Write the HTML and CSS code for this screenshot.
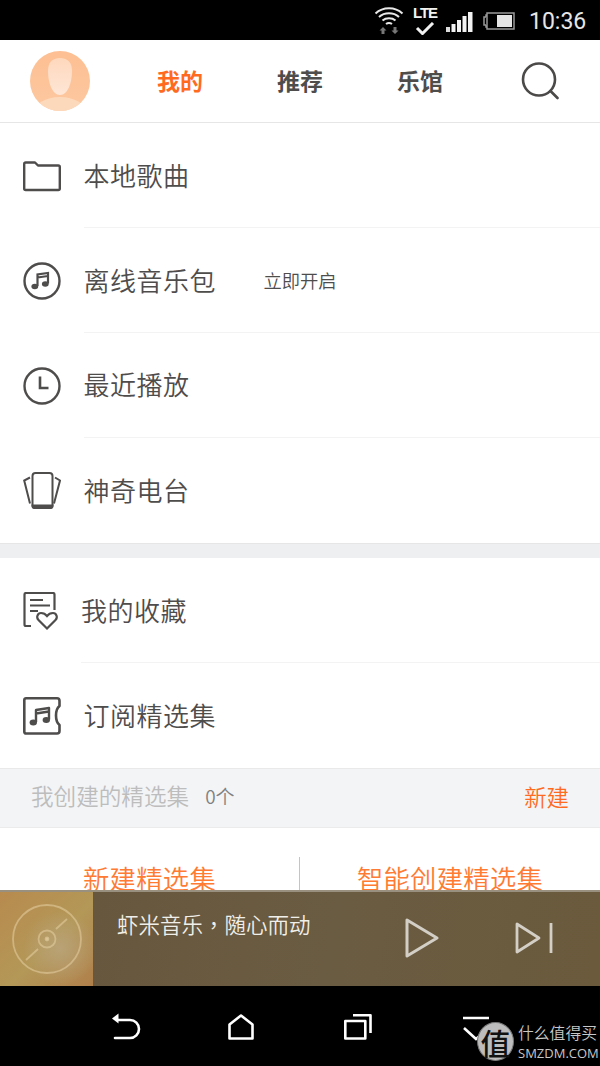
FILE: index.html
```html
<!DOCTYPE html>
<html lang="zh">
<head>
<meta charset="utf-8">
<title>虾米音乐</title>
<link rel="stylesheet" href="styles.css">
</head>
<body>
<div class="status">
  <svg class="st-wifi" width="30" height="28" viewBox="0 0 30 28" fill="none" stroke="#e8e8e8" stroke-width="2">
    <path d="M1.500 7.500C9 .5 21 .5 28.500 7.500M5 11c5.500-5 14.500-5 20 0M8.500 14.500c3.500-3 9.500-3 13 0M12 18c1.800-1.300 4.200-1.300 6 0"/>
    <path d="M9 21l-3.500 3.500h2V28h3v-3.500h2zM21 28l3.500-3.500h-2V21h-3v3.500h-2z" fill="#777" stroke="none"/>
  </svg>
  <div class="st-lte">
    <span class="st-lte-text">LTE</span>
    <svg width="20" height="13" viewBox="0 0 20 13" fill="none" stroke="#f2f2f2" stroke-width="3"><path d="M2 6l5.500 5.500L18 1"/></svg>
  </div>
  <svg class="st-signal" width="27" height="20" viewBox="0 0 27 20" fill="#f2f2f2">
    <rect x="0" y="15" width="4" height="5" fill="#ddd"/><rect x="5.500" y="12" width="4" height="8"/><rect x="11" y="8" width="4" height="12"/><rect x="16.500" y="4" width="4" height="16"/><rect x="22" y="0" width="4.500" height="20"/>
  </svg>
  <svg class="st-batt" width="32" height="18" viewBox="0 0 32 18">
    <path d="M3 5V3h1M3 13v2h1M3 5H1v8h2" fill="none" stroke="#999" stroke-width="1.500"/>
    <rect x="4" y="1" width="27" height="16" fill="none" stroke="#999" stroke-width="1.500"/>
    <rect x="14" y="3" width="15" height="12" fill="#e6e6e6"/>
  </svg>
  <span class="st-time">10:36</span>
</div>

<main class="main">
  <header class="topbar">
    <div class="avatar">
      <svg width="60" height="60" viewBox="0 0 60 60">
        <defs>
          <clipPath id="av"><circle cx="30" cy="30" r="30"/></clipPath>
          <linearGradient id="avbg" x1="0" y1="0" x2="0" y2="1"><stop offset="0" stop-color="#fdbf93"/><stop offset="1" stop-color="#fdc8a0"/></linearGradient>
          <linearGradient id="avface" x1="0" y1="0" x2="0" y2="1"><stop offset="0" stop-color="#fed8bd"/><stop offset="1" stop-color="#fee6d6"/></linearGradient>
        </defs>
        <g clip-path="url(#av)">
          <rect width="60" height="60" fill="url(#avbg)"/>
          <ellipse cx="30" cy="61" rx="26" ry="15" fill="#fdd9bc"/>
          <path d="M30 7c-8 0-12 5-12 13 0 11 4 24 12 24s12-13 12-24c0-8-4-13-12-13z" fill="url(#avface)"/>
        </g>
      </svg>
    </div>
    <nav class="tabs">
      <span class="tab tab-on">我的</span>
      <span class="tab">推荐</span>
      <span class="tab">乐馆</span>
    </nav>
    <svg class="search" width="38" height="38" viewBox="0 0 38 38" fill="none" stroke="#4c4949" stroke-width="2.600" stroke-linecap="round">
      <circle cx="18" cy="17.500" r="16"/><path d="M29.500 29l7 7"/>
    </svg>
  </header>

  <section class="group">
    <div class="row">
      <svg class="ico" width="38" height="38" viewBox="0 0 38 38" fill="none" stroke="#4f4c4c" stroke-width="2.400" stroke-linejoin="round">
        <path d="M1.200 7c0-1 .5-1.500 1.500-1.500H12l3 3h20.300c1 0 1.500.5 1.500 1.500v21.500c0 1-.5 1.500-1.500 1.500H2.700c-1 0-1.500-.5-1.500-1.500z"/>
      </svg>
      <div class="cell cell-low"><span class="label">本地歌曲</span></div>
    </div>
    <div class="row">
      <svg class="ico" width="38" height="38" viewBox="0 0 38 38" fill="none" stroke="#4f4c4c" stroke-width="2.400">
        <circle cx="19" cy="19" r="17.500"/>
        <path d="M14.500 24V12.500l10.500-1.500v10.500M14.500 15.500l10.500-1.500" stroke-width="2.200"/>
        <ellipse cx="11.800" cy="24.500" rx="3.400" ry="2.700" fill="#4f4c4c" stroke="none"/>
        <ellipse cx="22.300" cy="22" rx="3.400" ry="2.700" fill="#4f4c4c" stroke="none"/>
      </svg>
      <div class="cell cell-low"><span class="label">离线音乐包</span><span class="hint">立即开启</span></div>
    </div>
    <div class="row">
      <svg class="ico" width="38" height="38" viewBox="0 0 38 38" fill="none" stroke="#4f4c4c" stroke-width="2.400">
        <circle cx="19" cy="19" r="17.500"/><path d="M17 9.500V21h8.500" stroke-width="2.600"/>
      </svg>
      <div class="cell"><span class="label">最近播放</span></div>
    </div>
    <div class="row">
      <svg class="ico" width="38" height="38" viewBox="0 0 38 38" fill="none" stroke="#4f4c4c" stroke-width="2">
        <rect x="9.500" y="1" width="20" height="35" rx="3"/><path d="M9.500 33.500h20V34c0 1-1 2-2 2h-16c-1 0-2-1-2-2z" fill="#4f4c4c"/>
        <path d="M7 5.500L1.200 8.500 7 31.500M32 5.500l5 3-6 23"/>
      </svg>
      <div class="cell cell-last"><span class="label">神奇电台</span></div>
    </div>
  </section>

  <div class="band"></div>

  <section class="group">
    <div class="row">
      <svg class="ico" width="38" height="38" viewBox="0 0 38 38" fill="none" stroke="#4f4c4c" stroke-width="2.200">
        <path d="M8 34H3c-1 0-1.500-.5-1.500-1.500V2.500C1.500 1.500 2 1 3 1h27c1 0 1.500.5 1.500 1.500V18"/>
        <path d="M7 8h13M7 13.500h20M7 19h8"/>
        <path d="M24 36.500L15.500 28c-2.500-2.500-1-7 2.500-7 2.500 0 4.500 1 6 3 1.500-2 3.500-3 6-3 3.500 0 5 4.500 2.500 7z" fill="#fff"/>
      </svg>
      <div class="cell cell-tight cell-low"><span class="label">我的收藏</span></div>
    </div>
    <div class="row">
      <svg class="ico" width="38" height="38" viewBox="0 0 38 38" fill="none" stroke="#4f4c4c" stroke-width="2.600" stroke-linejoin="round">
        <path d="M3 1.300h31c1.500 0 2.500 1 2.500 2.500V9c-2.500 2-3.500 5.500-3.500 9.500s1 7.500 3.500 9.500v6c0 1.500-1 2.500-2.500 2.500H3c-1 0-1.700-.7-1.700-1.700V3c0-1 .7-1.700 1.700-1.700z"/>
        <path d="M13 25V13l13-2v11.500M13 16.500l13-2" stroke-width="2.400"/>
        <ellipse cx="10.300" cy="25.500" rx="3.700" ry="2.900" fill="#4f4c4c" stroke="none"/>
        <ellipse cx="23.300" cy="23" rx="3.700" ry="2.900" fill="#4f4c4c" stroke="none"/>
      </svg>
      <div class="cell cell-last"><span class="label">订阅精选集</span></div>
    </div>
  </section>

  <div class="listhead">
    <span class="lh-title">我创建的精选集</span>
    <span class="lh-count">0个</span>
    <span class="lh-new">新建</span>
  </div>

  <div class="actions">
    <span class="act act-left">新建精选集</span>
    <span class="act act-right">智能创建精选集</span>
  </div>
</main>

<section class="player">
  <div class="cover">
    <svg width="70" height="70" viewBox="0 0 70 70" fill="none" stroke="#e6cfa2" stroke-opacity=".55" stroke-width="1.800">
      <circle cx="35" cy="35" r="34"/><circle cx="35" cy="35" r="8.500"/><circle cx="35" cy="35" r="1.500" fill="#e6cfa2" fill-opacity=".6"/>
      <path d="M44 25l11-10M26 45L14 56"/>
    </svg>
  </div>
  <div class="pl-title" lang="zh-Hant">虾米音乐，随心而动</div>
  <svg class="pl-play" width="34" height="40" viewBox="0 0 34 40" fill="none" stroke="#d3cec6" stroke-width="3" stroke-linejoin="round"><path d="M2 2v36l30-18z"/></svg>
  <svg class="pl-next" width="38" height="32" viewBox="0 0 38 32" fill="none" stroke="#d3cec6" stroke-width="2.800" stroke-linejoin="round"><path d="M2 2v28l22-14zM36 1v30"/></svg>
</section>

<footer class="navbar">
  <svg class="nv nv-back" width="32" height="27" viewBox="0 0 32 27" fill="none" stroke="#fff" stroke-width="2.600" stroke-linecap="round" stroke-linejoin="round">
    <path d="M8 7h12c5 0 9 4 9 9s-4 9-9 9H5"/><path d="M2 5.500L8.500 0.500v10z" fill="#fff" stroke="none"/>
  </svg>
  <svg class="nv nv-home" width="26" height="26" viewBox="0 0 26 26" fill="none" stroke="#fff" stroke-width="2.600" stroke-linejoin="round"><path d="M1.500 10.500L13 1.500l11.500 9v14h-23z"/></svg>
  <svg class="nv nv-rec" width="28" height="26" viewBox="0 0 28 26" fill="none" stroke="#fff" stroke-width="2.600" stroke-linejoin="round"><rect x="1.300" y="7" width="20" height="17.500"/><path d="M9 1.300h17.500V19"/></svg>
  <svg class="nv nv-down" width="30" height="26" viewBox="0 0 30 26" fill="none" stroke="#fff" stroke-width="2.600"><path d="M1 2h26M2 12l12 11 13-11"/></svg>
</footer>

<aside class="mark">
  <span class="mark-seal">值</span>
  <span class="mark-text">
    <span class="mark-cn">什么值得买</span>
    <span class="mark-en">SMZDM.COM</span>
  </span>
</aside>
</body>
</html>
```

FILE: styles.css
```css
* { box-sizing: border-box; }
html, body { margin: 0; padding: 0; }
body {
  position: relative;
  width: 600px;
  height: 1066px;
  overflow: hidden;
  display: flex;
  flex-direction: column;
  background: #fff;
  font-family: "Noto Sans CJK SC", "Noto Sans", sans-serif;
  color: #4f4c4c;
}

/* status bar */
.status {
  flex: 0 0 40px;
  background: #000;
  display: flex;
  align-items: flex-start;
  padding-left: 374px;
  color: #e8e8e8;
}
.st-wifi { margin-top: 6px; }
.st-lte {
  width: 24px;
  margin: 5px 0 0 9px;
  display: flex;
  flex-direction: column;
  align-items: center;
}
.st-lte-text {
  font: 700 15px/16px "Liberation Sans", sans-serif;
  letter-spacing: -1px;
  color: #f2f2f2;
}
.st-lte svg { margin-top: 1px; }
.st-signal { margin: 12px 0 0 9px; }
.st-batt { margin: 12px 0 0 10px; }
.st-time {
  margin: 8px 0 0 14px;
  font: 400 23px/28px Roboto, sans-serif;
  color: #e6e6e6;
}

/* main */
.main {
  flex: 1 1 auto;
  min-height: 0;
  overflow: hidden;
}
.topbar {
  height: 83px;
  display: flex;
  align-items: center;
  padding: 0 0 0 30px;
  border-bottom: 1px solid #e6e6e6;
}
.avatar { width: 60px; height: 60px; }
.avatar svg { display: block; }
.tabs { display: flex; gap: 74px; margin: -2px 0 0 67px; }
.tab {
  width: 46px;
  font-size: 23px;
  line-height: 30px;
  font-weight: 700;
  white-space: nowrap;
  color: #4f4c4c;
}
.tab-on { color: #ff6a1f; }
.search { margin: -1px 0 0 78px; }

.row {
  height: 105px;
  display: flex;
  align-items: center;
  padding-left: 23px;
}
.ico { flex: none; margin-right: 22.500px; }
.cell {
  flex: 1;
  height: 100%;
  display: flex;
  align-items: center;
  padding-bottom: 2px;
  border-bottom: 1px solid #f3f3f3;
}
.cell-low { padding-bottom: 0; }
.cell-last { border-bottom: 0; }
.cell-tight { margin-left: -2.500px; }
.label {
  font-size: 26px;
  letter-spacing: .5px;
  line-height: 36px;
  font-weight: 350;
  color: #4f4c4c;
}
.hint {
  margin-left: 47.500px;
  font-size: 18.300px;
  line-height: 26px;
  font-weight: 350;
  color: #4f4c4c;
}

.band {
  height: 15px;
  background: #eeeff0;
  border-top: 1px solid #e6e6e6;
}

.listhead {
  height: 60px;
  display: flex;
  align-items: center;
  padding: 0 31px 4px;
  background: #f3f4f6;
  border-top: 1px solid #e9e9ea;
  border-bottom: 1px solid #ebebeb;
}
.lh-title { font-size: 22.600px; line-height: 30px; font-weight: 350; color: #bdbdbd; }
.lh-count { margin-left: 16px; font-size: 19px; line-height: 30px; font-weight: 350; color: #808080; }
.lh-new { margin-left: auto; font-size: 22.400px; line-height: 30px; font-weight: 350; color: #ff6a1f; }

.actions {
  display: grid;
  grid-template-columns: 299px 1fr;
  padding-top: 29px;
}
.act {
  height: 40px;
  font-size: 26.300px;
  letter-spacing: .3px;
  line-height: 42px;
  font-weight: 350;
  color: #ff7a33;
  text-align: center;
  white-space: nowrap;
}
.act-right { border-left: 1px solid #c4c4c4; }

/* player */
.player {
  flex: 0 0 96px;
  display: flex;
  align-items: flex-start;
  border-top: 2px solid #9a9080;
  background: linear-gradient(100deg, #66553c 0%, #6a5c42 55%, #6b5a3c 100%);
}
.cover {
  flex: 0 0 93px;
  height: 100%;
  display: flex;
  align-items: center;
  justify-content: center;
  background:
    radial-gradient(circle at 65% 60%, #b9a276 0%, rgba(185,162,118,0) 45%),
    linear-gradient(135deg, #b88a4e 0%, #b39858 55%, #b07f4a 100%);
}
.pl-title {
  flex: 0 0 auto;
  width: 288px;
  margin: 18px 0 0 24px;
  font-family: "Noto Sans CJK TC", sans-serif;
  font-size: 21.500px;
  line-height: 28px;
  font-weight: 350;
  color: #f1efe9;
  white-space: nowrap;
}
.pl-play { flex: none; margin-top: 26px; }
.pl-next { flex: none; margin: 30px 0 0 76px; }

/* nav */
.navbar {
  flex: 0 0 80px;
  background: #000;
  display: flex;
  align-items: flex-start;
  padding-left: 110px;
}
.nv { flex: none; margin-top: 27px; }
.nv-home { margin-left: 86px; margin-top: 28px; }
.nv-rec { margin-left: 90px; margin-top: 28px; }
.nv-down { margin-left: 90px; margin-top: 30px; }

/* watermark */
.mark {
  position: absolute;
  left: 477px;
  top: 1022px;
  display: flex;
  align-items: center;
  gap: 4px;
  color: #c8c8c8;
}
.mark-seal {
  width: 37px;
  height: 39px;
  border-radius: 50%;
  background: #bdbdbd;
  color: #111;
  border: 1px solid #777;
  display: flex;
  align-items: center;
  justify-content: center;
  font-size: 30px;
  line-height: 1;
  font-weight: 500;
}
.mark-text { display: flex; flex-direction: column; }
.mark-cn { font-size: 15.800px; line-height: 22px; font-weight: 350; white-space: nowrap; }
.mark-en { font: 400 13px/16px "Open Sans", sans-serif; white-space: nowrap; margin-top: 1px; }
```
